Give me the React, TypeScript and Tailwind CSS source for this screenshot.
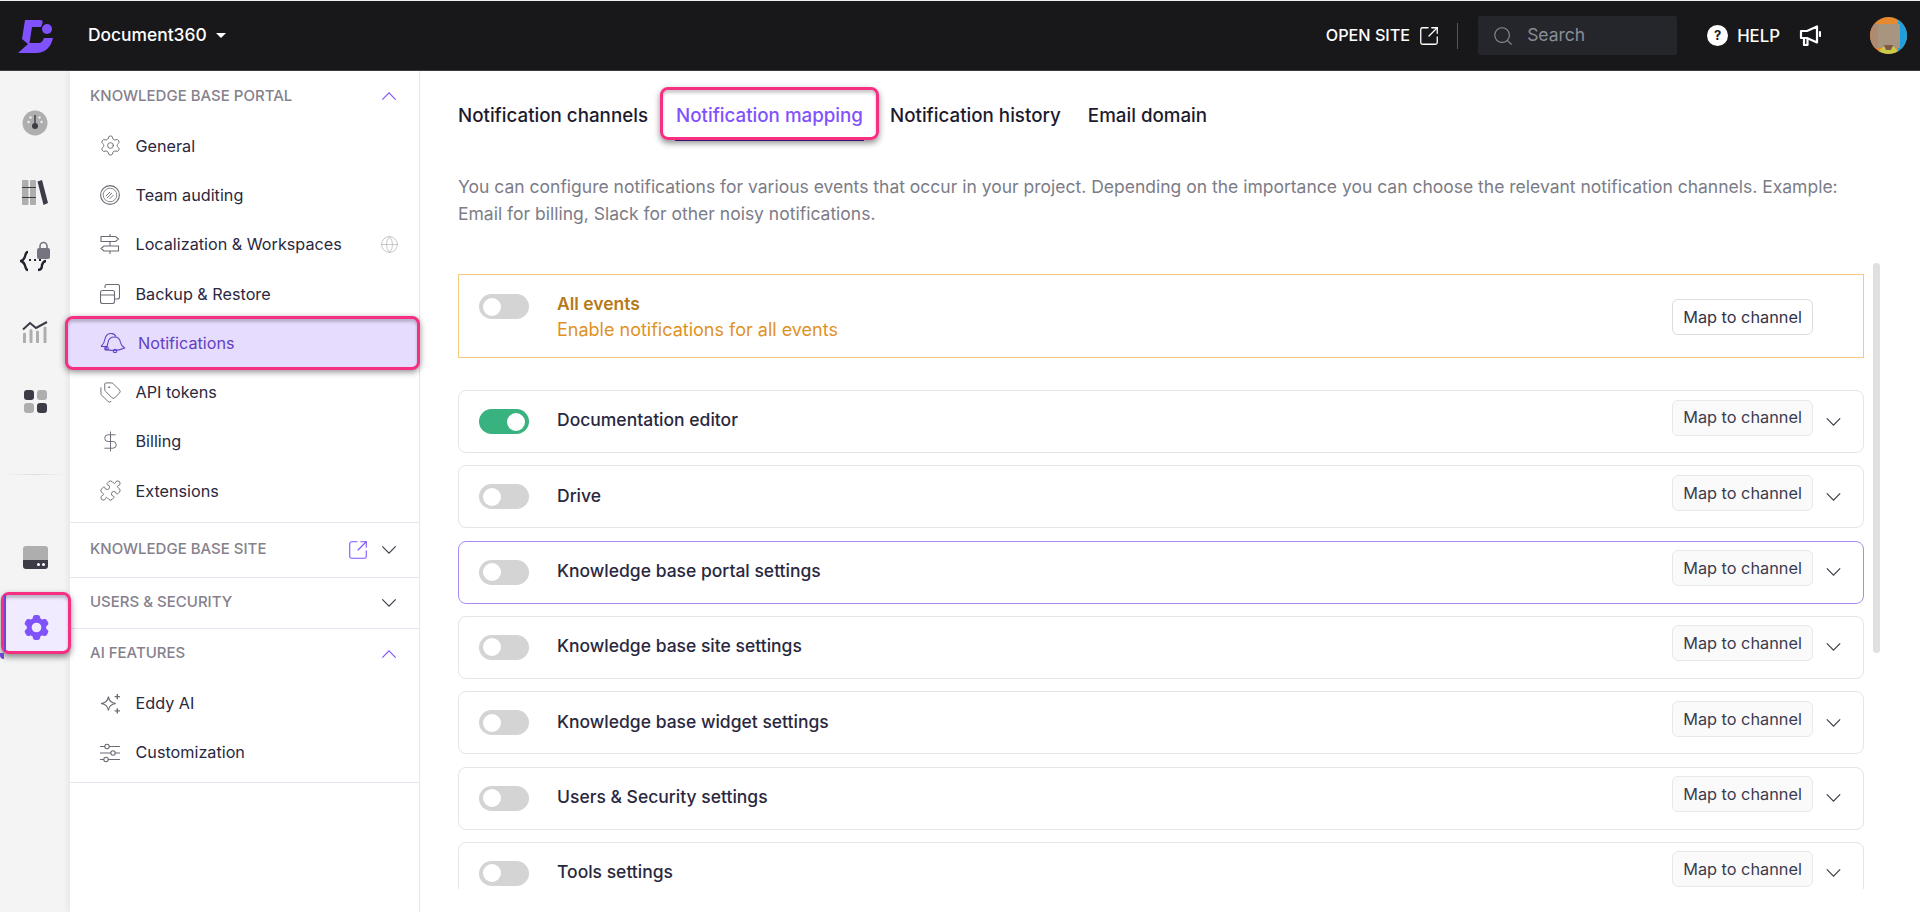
import { DollarSign, Globe, Puzzle, Search, Settings, SquareArrowOutUpRight, Tags } from "lucide-react";
import type { ReactNode } from "react";
import { HiCog6Tooth } from "react-icons/hi2";

const rows = [
  { name: "Documentation editor", on: true },
  { name: "Drive" },
  { name: "Knowledge base portal settings", focused: true },
  { name: "Knowledge base site settings" },
  { name: "Knowledge base widget settings" },
  { name: "Users & Security settings" },
  { name: "Tools settings" },
];

function Toggle({ on }: { on?: boolean }) {
  return (
    <span
      className={
        on
          ? "flex h-[25px] w-[50px] shrink-0 items-center justify-end rounded-full bg-[#38b27f] pr-[4px]"
          : "flex h-[25px] w-[50px] shrink-0 items-center rounded-full bg-[#d4d4d4] pl-[4px]"
      }
    >
      <span className="h-[18px] w-[18px] rounded-full bg-white" />
    </span>
  );
}

function Thin({ up, className }: { up?: boolean; className: string }) {
  return (
    <svg viewBox="0 0 16 9" className={className} fill="none" stroke="currentColor" strokeWidth="1.3">
      <path d={up ? "M.5 8.500 8 1l7.500 7.500" : "M.5.5 8 8 15.500.5"} />
    </svg>
  );
}

function MapButton({ plain }: { plain?: boolean }) {
  return (
    <button
      className={
        plain
          ? "h-[36px] w-[141px] rounded-md border border-[#dcdce2] bg-white text-[16.300px] text-[#33334a]"
          : "h-[36px] w-[141px] rounded-md border border-[#e8e8ec] bg-[#fafafa] text-[16.300px] text-[#3b3b4f]"
      }
    >
      Map to channel
    </button>
  );
}

function NavItem({ icon, label, right }: { icon: ReactNode; label: string; right?: ReactNode }) {
  return (
    <div className="flex h-[49.33px] items-center pl-[30px] pr-[20px] text-[16.2px] text-[#2a2840]">
      <span className="flex w-[35.5px] shrink-0 items-center text-[#6b6b75]">{icon}</span>
      <span className="flex-1">{label}</span>
      {right}
    </div>
  );
}

function SectionHead({ label, open, extra, h }: { label: string; open?: boolean; extra?: ReactNode; h: string }) {
  return (
    <div className={`flex items-center pl-[20px] pr-[22px] text-[15px] font-medium text-[#85818d] ${h}`}>
      <span className="flex-1">{label}</span>
      {extra}
      {open ? (
        <Thin up className="h-[8px] w-[16px] text-[#8052fe]" />
      ) : (
        <Thin className="h-[8px] w-[16px] text-[#3c3b46]" />
      )}
    </div>
  );
}

const ICON = "h-[20px] w-[20px]";
const LUCIDE = "-ml-[1.5px] h-[23px] w-[23px]";

function Auditing() {
  return (
    <svg viewBox="0 0 20 20" className={ICON} fill="none" stroke="currentColor" strokeWidth="1.1">
      <circle cx="10" cy="10" r="9.400" />
      <circle cx="10" cy="10" r="6.800" strokeWidth=".8" />
      <path d="m6 11 4-4M7 13l5-5M9.500 14l4-4" strokeWidth=".9" />
    </svg>
  );
}

function Signs() {
  return (
    <svg viewBox="0 0 20 20" className={ICON} fill="none" stroke="currentColor" strokeWidth="1.1">
      <path d="M10 0v2.500M10 7.500v4.500M10 17v3M1 2.500h14.500l3 2.500-3 2.500H1zM18.500 12H4l-3 2.500L4 17h14.500z" />
    </svg>
  );
}

function Backup() {
  return (
    <svg viewBox="0 0 20 20" className={ICON} fill="none" stroke="currentColor" strokeWidth="1.1">
      <rect x=".5" y="6.500" width="14" height="13" rx="2" />
      <path d="M.5 11h14M5 4V2.500a2 2 0 0 1 2-2h10.500a2 2 0 0 1 2 2V13a2 2 0 0 1-2 2H15" />
    </svg>
  );
}

function Bells() {
  return (
    <svg viewBox="0 0 26 20" className="h-[20px] w-[26px]" fill="none" stroke="currentColor" strokeWidth="1.1">
      <path d="M1 13.500C4 11 4.500 9 5 6c.5-3 2.500-5 5-5.500 3-.5 5 1 6 3" />
      <path d="M1 13.500h6.500" />
      <path d="M8 9.500c.5-3 3-5.500 6.500-5.500s5.500 2.500 6 5.500c.5 2.500 2 4 4 5.500-3 1.500-7 2.500-11 2.500-3 0-5.500-.5-8-1.500 1.500-1.500 2-4 2.500-6.500Z" />
      <circle cx="6.500" cy="15.500" r="1.800" />
      <circle cx="15" cy="18" r="1.700" />
    </svg>
  );
}

function Stars() {
  return (
    <svg viewBox="0 0 20 20" className="h-[21px] w-[21px]" fill="none" stroke="currentColor" strokeWidth="1.1">
      <path d="M8 3.500c.5 3.500 2.500 6 7 6.500-4.500.5-6.500 3-7 6.500C7.500 13 5.500 10.500 1 10c4.500-.5 6.500-3 7-6.500Z" />
      <path d="M16.500 1v5M14 3.500h5M16.500 14.500v5M14 17h5" strokeWidth="1.300" />
    </svg>
  );
}

function Sliders() {
  return (
    <svg viewBox="0 0 20 20" className={ICON} fill="none" stroke="currentColor" strokeWidth="1.1">
      <path d="M0 3.500h5M9 3.500h11M0 10h11M15 10h5M0 16.500h4M8 16.500h12" />
      <circle cx="7" cy="3.500" r="2.200" />
      <circle cx="13" cy="10" r="2.200" />
      <circle cx="6" cy="16.500" r="2.200" />
    </svg>
  );
}

function RailIcon({ y, children }: { y: string; children: ReactNode }) {
  return <div className={`flex w-full items-center justify-center ${y}`}>{children}</div>;
}

function Rail() {
  return (
    <div className="relative flex w-[70px] shrink-0 flex-col bg-[#f4f4f4]">
      <RailIcon y="mt-[34px] h-[35px]">
        <svg viewBox="0 0 26 26" className="h-[26px] w-[26px]">
          <circle cx="13" cy="13" r="12.500" fill="#aeaeae" />
          <path d="M12.300 5h1.400v8h-1.400z" fill="#3c3b46" />
          <circle cx="13" cy="16" r="3" fill="#3c3b46" />
          <circle cx="6.500" cy="12" r="1.200" fill="#eee" />
          <circle cx="19.500" cy="12" r="1.200" fill="#eee" />
          <circle cx="8.500" cy="7.500" r="1.200" fill="#eee" />
          <circle cx="17.500" cy="7.500" r="1.200" fill="#eee" />
        </svg>
      </RailIcon>
      <RailIcon y="mt-[35px] h-[35px]">
        <svg viewBox="0 0 26 26" className="h-[26px] w-[26px]">
          <rect x="0" y="0" width="6.500" height="25" rx="1" fill="#aeaeae" />
          <rect x="8" y="0" width="6" height="25" rx="1" fill="#aeaeae" />
          <path d="M0 7.500h14M0 17.500h14" stroke="#3c3b46" strokeWidth="1" />
          <path d="M15.500 1.500 20 0l6 23-4.500 2z" fill="#3c3b46" />
        </svg>
      </RailIcon>
      <RailIcon y="mt-[30px] h-[35px]">
        <svg viewBox="0 0 30 34" className="h-[34px] w-[30px]">
          <rect x="17" y="7" width="13" height="11" rx="2" fill="#76757f" />
          <path d="M20 7V5a3.500 3.500 0 0 1 7 0v2" fill="none" stroke="#76757f" strokeWidth="1.600" />
          <path d="M8 11C4 11 7 18 1 20c6 2 3 9 7 9M26 20c-2 0-3 1-4 4 0 3-1 5-4 5" fill="none" stroke="#24232e" strokeWidth="2.400" />
          <path d="M9 19h15" stroke="#24232e" strokeWidth="1.800" strokeDasharray="2 3" />
        </svg>
      </RailIcon>
      <RailIcon y="mt-[39px] h-[35px]">
        <svg viewBox="0 0 26 22" className="h-[22px] w-[26px]">
          <path d="M1 8.500 8 2l6 5 11-6" fill="none" stroke="#3c3b46" strokeWidth="2" />
          <path d="M2.500 13v8M9 9.500V21M15.500 11v10M23 7v14" stroke="#aeaeae" strokeWidth="3" strokeLinecap="round" />
        </svg>
      </RailIcon>
      <RailIcon y="mt-[35px] h-[35px]">
        <div className="grid h-[23px] w-[23px] grid-cols-2 gap-[3px]">
          <span className="rounded-[3px] bg-[#3c3b46]" />
          <span className="rounded-[3px] bg-[#aeaeae]" />
          <span className="rounded-[3px] bg-[#aeaeae]" />
          <span className="rounded-[3px] bg-[#3c3b46]" />
        </div>
      </RailIcon>
      <div className="mx-[5px] mt-[55px] h-px bg-gradient-to-r from-transparent via-[#dcdcdc] to-transparent" />
      <RailIcon y="mt-[65px] h-[35px]">
        <div className="flex h-[23px] w-[25px] flex-col overflow-hidden rounded-[3px]">
          <span className="flex-1 bg-[#aeaeae]" />
          <span className="flex h-[9px] items-center justify-end gap-[2px] bg-[#3c3b46] pr-[3px]">
            <span className="h-[3px] w-[3px] rounded-full bg-white" />
            <span className="h-[3px] w-[3px] rounded-full bg-white" />
          </span>
        </div>
      </RailIcon>
      <div className="relative z-20 ml-px mt-[17px] flex h-[62px] w-[70px] items-center justify-center rounded-[8px] border-[3px] border-[#f62f82] bg-[#f0ebfe] pt-[8px] shadow-[0_3px_6px_rgba(0,0,0,0.45),inset_0_3px_3px_rgba(0,0,0,0.22)]">
        <span className="absolute inset-y-0 left-0 w-[1.500px] bg-[#6d45d9]" />
        <span className="absolute -bottom-[8px] -left-[4px] h-[6px] w-[4px] rounded-bl-[4px] bg-[#6d45d9]" />
        <HiCog6Tooth className="h-[31px] w-[31px] text-[#8052fe]" />
      </div>
    </div>
  );
}

function Sidebar() {
  return (
    <div className="relative z-10 w-[350px] shrink-0 border-r border-[#e6e6ec] bg-white shadow-[-3px_0_6px_rgba(0,0,0,0.05)]">
      <SectionHead label="KNOWLEDGE BASE PORTAL" open h="h-[50px]" />
      <div className="border-b border-[#e4e6f0] pb-[6px]">
        <NavItem icon={<Settings className={LUCIDE} strokeWidth={1} />} label="General" />
        <NavItem icon={<Auditing />} label="Team auditing" />
        <NavItem
          icon={<Signs />}
          label="Localization & Workspaces"
          right={<Globe className="h-[19px] w-[19px] text-[#b9b9bd]" strokeWidth={1} />}
        />
        <NavItem icon={<Backup />} label="Backup & Restore" />
        <div className="relative flex h-[49.33px] items-center pl-[30px] text-[16.2px] text-[#6140c4]">
          <span className="absolute -left-[5px] -right-px -top-[2px] bottom-[-2px] rounded-[8px] border-[3px] border-[#f62f82] bg-[#e6dcfd] shadow-[0_2px_6px_rgba(0,0,0,0.45),inset_0_3px_3px_rgba(0,0,0,0.2)]" />
          <span className="relative flex w-[38px] items-center text-[#6140c4]">
            <Bells />
          </span>
          <span className="relative">Notifications</span>
        </div>
        <NavItem icon={<Tags className={LUCIDE} strokeWidth={1} />} label="API tokens" />
        <NavItem icon={<DollarSign className={LUCIDE} strokeWidth={1} />} label="Billing" />
        <NavItem icon={<Puzzle className={LUCIDE} strokeWidth={1} />} label="Extensions" />
      </div>
      <div className="border-b border-[#e4e6f0]">
        <SectionHead
          label="KNOWLEDGE BASE SITE"
          h="h-[54px]"
          extra={<SquareArrowOutUpRight className="mr-[12px] h-[22px] w-[22px] text-[#8052fe]" strokeWidth={1.2} />}
        />
      </div>
      <div className="border-b border-[#e4e6f0]">
        <SectionHead label="USERS & SECURITY" h="h-[50px]" />
      </div>
      <div className="border-b border-[#e4e6f0] pb-[5px]">
        <SectionHead label="AI FEATURES" open h="h-[50px]" />
        <NavItem icon={<Stars />} label="Eddy AI" />
        <NavItem icon={<Sliders />} label="Customization" />
      </div>
    </div>
  );
}

function Header() {
  return (
    <header className="flex h-[71px] shrink-0 items-center border-y border-t-[#eeeeee] border-b-[#3b3b40] bg-[#18181b] text-white">
      <svg viewBox="0 0 70 70" className="h-[70px] w-[70px] shrink-0" fill="#8052fe">
        <path d="M25 19H40C42 19 43 20 42.500 22L41 26H32L29.500 42H39C42 42 43 39 44 37H53C51 46 45 52 36 52H18L28 43L22 38Z" />
        <circle cx="47" cy="28" r="5" />
      </svg>
      <span className="ml-[18px] text-[17.400px] font-medium">Document360</span>
      <span className="ml-[9px] h-0 w-0 border-x-[5px] border-t-[5px] border-x-transparent border-t-white" />
      <span className="ml-auto text-[16.200px] font-medium">OPEN SITE</span>
      <SquareArrowOutUpRight className="ml-[8px] h-[22px] w-[22px]" strokeWidth={1.4} />
      <span className="ml-[17px] h-[26px] w-px bg-[#55555a]" />
      <div className="ml-[20px] flex h-[39px] w-[199px] items-center rounded-[2px] bg-[#25262b] pl-[14px] text-[17.500px] text-[#8a8d96]">
        <Search className="h-[22px] w-[22px]" strokeWidth={1.2} />
        <span className="ml-[13px]">Search</span>
      </div>
      <span className="ml-[30px] flex h-[21px] w-[21px] items-center justify-center rounded-full bg-white text-[13px] font-bold text-[#18181b]">
        ?
      </span>
      <span className="ml-[9px] mt-[3px] text-[16.800px] font-medium">HELP</span>
      <svg viewBox="0 0 22 22" className="ml-[19px] h-[22px] w-[22px]" fill="none" stroke="white" strokeWidth="2.200" strokeLinejoin="round">
        <path d="M2 6h6l10-4.500v16L8 13H2zM5 13v7h3.500v-7" />
        <path d="M21 7v4" strokeLinecap="round" />
      </svg>
      <svg viewBox="0 0 37 37" className="ml-[49px] mr-[13px] h-[37px] w-[37px] rounded-full">
        <rect width="37" height="37" fill="#e58a2e" />
        <rect x="28" width="9" height="37" fill="#1f9fe0" />
        <rect y="7" width="30" height="24" fill="#ad8a70" />
        <rect x="8" y="7" width="22" height="24" fill="#a89580" />
        <path d="M6 37 13 30h11l6 7z" fill="#c9c94a" />
        <path d="M14 28h9l-2 5h-5z" fill="#7c5a44" />
      </svg>
    </header>
  );
}

function Tabs() {
  return (
    <div className="flex h-[90px] items-center text-[18.750px] font-medium text-[#1d1b2e]">
      <span>Notification channels</span>
      <span className="relative ml-[28px] text-[#8052fe]">
        <span className="absolute -left-[16px] -right-[16px] -top-[15px] -bottom-[10px]">
          <span className="absolute -bottom-px left-[15px] right-[15px] h-[3px] bg-[#5b21b6]" />
          <span className="absolute inset-0 rounded-[8px] border-[3px] border-[#f62f82] shadow-[0_3px_6px_rgba(0,0,0,0.45),inset_0_3px_3px_rgba(0,0,0,0.2)]" />
        </span>
        Notification mapping
      </span>
      <span className="ml-[27px]">Notification history</span>
      <span className="ml-[27px]">Email domain</span>
    </div>
  );
}

export default function App() {
  return (
    <div className="flex h-[912px] flex-col overflow-hidden bg-white font-['Inter',sans-serif]">
      <Header />
      <div className="flex min-h-0 flex-1">
        <Rail />
        <Sidebar />
        <main className="relative min-w-0 flex-1 pl-[38px] pr-[56px]">
          <Tabs />
          <p className="mt-[13px] text-[17.500px] leading-[26.500px] text-[#7c7c87]">
            You can configure notifications for various events that occur in your project. Depending on the importance you can choose the relevant notification channels. Example:
            <br />
            Email for billing, Slack for other noisy notifications.
          </p>
          <div className="mt-[36px] h-[626px] overflow-hidden pt-[11px]">
            <div className="flex h-[84px] items-start border border-[#f5c97f] pl-[20px] pr-[50px]">
              <span className="mt-[19px]">
                <Toggle />
              </span>
              <div className="ml-[28px] mt-[16px] flex-1 leading-[26px]">
                <div className="text-[17.500px] font-semibold text-[#b57a16]">All events</div>
                <div className="text-[18px] text-[#e0921f]">Enable notifications for all events</div>
              </div>
              <span className="mt-[24px]">
                <MapButton plain />
              </span>
            </div>
            <div className="mt-[32px] flex flex-col gap-[12.330px]">
              {rows.map((row) => (
                <div
                  key={row.name}
                  className={
                    row.focused
                      ? "flex h-[63px] shrink-0 items-center rounded-[8px] border border-[#a98bf5] pl-[20px] pr-[22px]"
                      : "flex h-[63px] shrink-0 items-center rounded-[8px] border border-[#e4e4ea] pl-[20px] pr-[22px]"
                  }
                >
                  <Toggle on={row.on} />
                  <span className="ml-[28px] flex-1 pb-[2px] text-[17.500px] font-medium text-[#2a2840]">{row.name}</span>
                  <div className="-mt-[8px]">
                    <MapButton />
                  </div>
                  <Thin className="ml-[13px] h-[8px] w-[15px] text-[#3c3b46]" />
                </div>
              ))}
            </div>
          </div>
          <div className="absolute right-[40px] top-[192px] h-[390px] w-[7px] rounded-full bg-[#e0e0e0]" />
        </main>
      </div>
    </div>
  );
}
